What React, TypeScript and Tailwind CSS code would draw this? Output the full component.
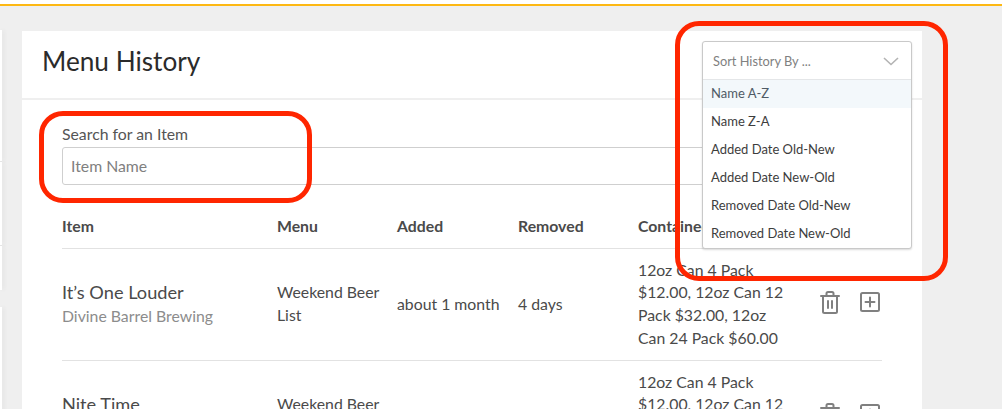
import React from "react";

const font = { fontFamily: "Lato, 'Open Sans', sans-serif" };

function Trash() {
  return (
    <svg width="20" height="23" viewBox="0 0 20 23" fill="none" stroke="#808080" strokeWidth="2" strokeLinecap="round" strokeLinejoin="round">
      <path d="M1 5h18" />
      <path d="M6.500 4.500V2.500A1.500 1.500 0 0 1 8 1h4a1.500 1.500 0 0 1 1.500 1.500v2" />
      <path d="M3 5v15.500A1.500 1.500 0 0 0 4.500 22h11a1.500 1.500 0 0 0 1.500-1.500V5" />
      <path d="M8 10v7M12 10v7" />
    </svg>
  );
}

function Plus() {
  return (
    <svg width="20" height="20" viewBox="0 0 20 20" fill="none" stroke="#808080" strokeWidth="2" strokeLinecap="round" strokeLinejoin="round">
      <rect x="1" y="1" width="18" height="18" rx="1.500" />
      <path d="M10 5.500v9M5.500 10h9" />
    </svg>
  );
}

const options = [
  "Name A-Z",
  "Name Z-A",
  "Added Date Old-New",
  "Added Date New-Old",
  "Removed Date Old-New",
  "Removed Date New-Old",
];

function Row({ name, brewery }: { name: string; brewery?: string }) {
  return (
    <div className="flex items-center h-[112px] border-b border-[#e2e2e2] text-[#4a4a4a] text-[15.800px]">
      <div className="w-[215px] shrink-0 -mt-[2px]">
        <div className="text-[18.200px] leading-[24px] text-[#4a4a4a]">{name}</div>
        <div className="text-[15.800px] leading-[24px] text-[#8c8c8c]">{brewery ?? "\u00a0"}</div>
      </div>
      <div className="w-[120px] shrink-0 leading-[23px] -mt-[3px]">Weekend Beer List</div>
      <div className="w-[121px] shrink-0 -mt-[2px]">about 1 month</div>
      <div className="w-[120px] shrink-0 -mt-[2px]">4 days</div>
      <div className="w-[150px] shrink-0 mr-[10px] leading-[22.700px] -mt-[1px]">12oz Can 4 Pack $12.00, 12oz Can 12 Pack $32.00, 12oz Can 24 Pack $60.00</div>
      <div className="flex items-center gap-[20px] ml-[22px] -mt-[5px]">
        <Trash />
        <Plus />
      </div>
    </div>
  );
}

export default function App() {
  return (
    <div className="relative w-[1002px] h-[409px] overflow-hidden bg-[#efefef]" style={font}>
      <div className="h-[6px] bg-white border-b-2 border-[#fdb813]" />
      <div className="flex items-start pt-[25px]">
        <div className="w-[2px] -mt-[1px] mr-[20px] shrink-0 flex flex-col">
          <div className="h-[132px] bg-white border-b border-[#e6e6e6] shadow-[2px_0_4px_rgba(0,0,0,0.07)]" />
          <div className="h-[84px] bg-white border-b border-[#e6e6e6] shadow-[2px_0_4px_rgba(0,0,0,0.07)]" />
          <div className="h-[44px] bg-white shadow-[2px_0_4px_rgba(0,0,0,0.07)]" />
          <div className="h-[120px] mt-[17px] bg-white shadow-[2px_0_4px_rgba(0,0,0,0.07)]" />
        </div>
        <div className="w-[900px] shrink-0 bg-white">
          <div className="h-[69px] border-b-2 border-[#efefef] flex items-center pl-[20px] pb-[5px]">
            <h1 className="text-[26.200px] text-[#2b2b2b] font-normal">Menu History</h1>
          </div>
          <div className="px-[40px]">
            <label className="block pt-[24px] text-[15.800px] leading-[20px] text-[#555]">Search for an Item</label>
            <div className="mt-[3px] h-[38px] border border-[#cfcfcf] rounded-[3px] flex items-center pl-[8px] text-[15.800px] text-[#808080]">Item Name</div>
            <div className="flex items-center h-[64px] pt-[19px] border-b border-[#e2e2e2] text-[15.800px] font-bold text-[#4a4a4a]">
              <div className="w-[215px]">Item</div>
              <div className="w-[120px]">Menu</div>
              <div className="w-[121px]">Added</div>
              <div className="w-[120px]">Removed</div>
              <div>Contained</div>
            </div>
            <Row name="It’s One Louder" brewery="Divine Barrel Brewing" />
            <Row name="Nite Time" />
          </div>
        </div>
      </div>

      <div className="absolute left-[702px] top-[41px] w-[210px] bg-white border border-[#c9c9c9] rounded-[3px] shadow-[0_1px_2px_rgba(0,0,0,0.15)]">
        <div className="h-[38px] flex items-center justify-between pl-[10px] pr-[12px] pt-[2px] border-b border-[#e4e6e8] text-[12.800px] text-[#808080]">
          <span>Sort History By ...</span>
          <svg width="16" height="9" viewBox="0 0 16 9" fill="none" stroke="#b3b3b3" strokeWidth="1.600">
            <path d="M1 1l7 6.500L15 1" />
          </svg>
        </div>
        {options.map((o, i) => (
          <div key={o} className={"h-[28px] flex items-center pl-[8px] text-[13px] " + (i === 0 ? "bg-[#f3f8fb] text-[#4f5b66]" : "text-[#3d3d3d]")}>
            {o}
          </div>
        ))}
      </div>

      <div className="absolute left-[39px] top-[111px] w-[273px] h-[92px] border-[5px] border-[#ff2600] rounded-[24px]" />
      <div className="absolute left-[675px] top-[21px] w-[273px] h-[260px] border-[5px] border-[#ff2600] rounded-[24px]" />
    </div>
  );
}
